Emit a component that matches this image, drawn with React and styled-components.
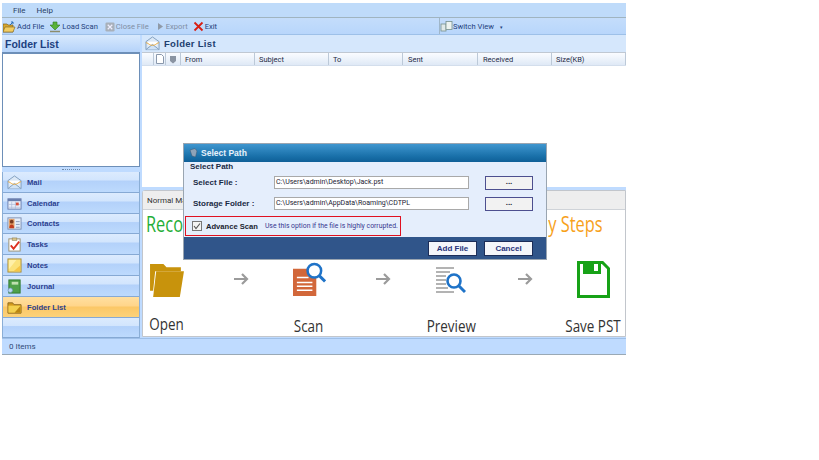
import React from 'react';
import styled, { createGlobalStyle } from 'styled-components';

const Global = createGlobalStyle`
  html, body { margin: 0; padding: 0; background: #fff; }
  body { font-family: Roboto, "Liberation Sans", Arial, sans-serif; }
`;

const Page = styled.div`
  width: 819px; height: 460px; background: #fff; overflow: hidden; padding: 3px 0 0 2px; box-sizing: border-box;
`;
const Win = styled.div`
  position: relative; width: 624px; height: 352px; background: #bfdbff; display: flex; flex-direction: column;
  box-sizing: border-box;
`;
const MenuBar = styled.div`
  height: 15px; flex: none; display: flex; align-items: center; gap: 11px; padding-left: 11px; box-sizing: border-box;
  background: #bfdbfa; border-bottom: 1px solid #a0b4c0; font-size: 8px; color: #2a3f66;
`;
const ToolBar = styled.div`
  height: 17px; flex: none; display: flex; align-items: stretch; background: linear-gradient(#c4ddfb, #b8d6fb);
  border-bottom: 1px solid #9dc0e8; font-size: 7.6px; color: #24417c; padding-left: 1px; box-sizing: border-box;
`;
const Tool = styled.span`
  display: flex; align-items: center; gap: 1px; padding-top: 1px; margin-right: ${p => p.$gap ?? 5}px; white-space: nowrap;
  color: ${p => p.$off ? '#7f8ea3' : '#24417c'};
`;
const SwitchWrap = styled.div`
  margin-left: auto; width: 187px; flex: none; box-sizing: border-box; display: flex; align-items: center;
  border-left: 1px solid #9fb6c9;
`;
const Caret = styled.span` font-size: 5px; margin-left: 5px; `;
const Body = styled.div`
  flex: 1; display: flex; gap: 2px; min-height: 0;
`;
const Side = styled.div`
  width: 138px; flex: none; display: flex; flex-direction: column;
`;
const SideHead = styled.div`
  height: 17px; flex: none; display: flex; align-items: center; padding-left: 3px; box-sizing: border-box;
  background: linear-gradient(#d8e9fd, #b5d3fa); font: bold 10.5px "Liberation Sans", sans-serif; color: #1d3f80;
`;
const TreeBox = styled.div`
  height: 115px; flex: none; background: #fff; border: 1px solid #6d8fb8; border-top: 2px solid #6d8fb8; box-sizing: border-box;
`;
const Grip = styled.div`
  height: 5px; flex: none; display: flex; justify-content: center; align-items: center; background: #bfdbff;
  &::before { content: ''; width: 18px; height: 1px; border-top: 1px dotted #6f8aa8; }
`;
const Nav = styled.div`
  flex: 1; display: flex; flex-direction: column; border: 1px solid #8aaed6; border-top: 0; border-bottom: 0; min-height: 0;
`;
const NavItem = styled.div`
  height: 20.8px; flex: none; box-sizing: border-box; display: flex; align-items: center; gap: 5px; padding: 1px 0 0 3px;
  border-bottom: 1px solid #86a9d4; font: bold 7.6px "Liberation Sans", sans-serif; color: #2c3f8f;
  background: ${p => p.$active
    ? 'linear-gradient(#ffdfa0 0, #ffd58a 45%, #fbc766 50%, #fcd27a 100%)'
    : 'linear-gradient(#dcebfe 0, #d2e5fd 40%, #b3d1fa 45%, #bddafd 100%)'};
`;
const NavIcon = styled.svg`
  width: 15px; height: 15px; flex: none; margin-left: 1px;
`;
const NavFill = styled.div`
  flex: 1; background: linear-gradient(#dcebfe 0, #d2e5fd 40%, #b3d1fa 45%, #bddafd 100%); border-bottom: 1px solid #86a9d4;
`;
const Main = styled.div`
  flex: 1; display: flex; flex-direction: column; min-width: 0;
`;
const MainHead = styled.div`
  height: 18px; flex: none; display: flex; align-items: center; gap: 4px; padding-left: 2px; box-sizing: border-box;
  background: #d5e7fc; font: bold 9.5px "Liberation Sans", sans-serif; letter-spacing: .3px; color: #21406f;
  border-bottom: 1px solid #c0c8d2;
`;
const Cols = styled.div`
  height: 13px; flex: none; display: flex; align-items: center; background: linear-gradient(#fafcff, #dfe9f6);
  font-size: 7.5px; color: #1f2b45; border-bottom: 1px solid #d3deec; box-sizing: border-box;
`;
const Col = styled.div`
  width: ${p => p.$w}px; flex: none; box-sizing: border-box; padding-left: ${p => p.$pad ?? 4}px; height: 100%;
  display: flex; align-items: center; border-right: 1px solid #bcc9d8;
`;
const List = styled.div`
  height: 121px; flex: none; background: #fff;
`;
const Gap = styled.div` height: 3px; flex: none; background: #bfdbff; `;
const TabPanel = styled.div`
  flex: 1; min-height: 0; display: flex; flex-direction: column; background: #fff; border: 1px solid #c2c6cc;
  border-radius: 3px 0 0 0; margin-bottom: 1px; box-sizing: border-box;
`;
const TabBar = styled.div`
  height: 19px; flex: none; background: #eeeeee; display: flex; align-items: center; padding-left: 4px;
  font-size: 8px; color: #333; white-space: nowrap; border-bottom: 1px solid #cfd3d8; box-sizing: border-box;
`;
const Banner = styled.div`
  flex: 1; display: flex; flex-direction: column; background: #fff; min-height: 0;
`;
const Title = styled.div`
  height: 27px; flex: none; display: flex; justify-content: space-between; align-items: center; padding: 0 22px 0 3px;
  font: 21px "Open Sans", sans-serif; white-space: nowrap;
`;
const Green = styled.span` color: #1fae38; display: inline-block; transform: scaleX(.78); transform-origin: left center; `;
const Orange = styled.span` color: #f7a11b; display: inline-block; transform: scaleX(.78); transform-origin: right center; `;
const Steps = styled.div`
  flex: 1; display: grid; grid-template-columns: 48px 94px 48px 94px 48px 94px 48px; align-items: start;
`;
const Step = styled.div`
  display: flex; flex-direction: column; align-items: center; width: 48px;
`;
const StepIcon = styled.div`
  height: 40px; display: flex; align-items: center; justify-content: center; margin-top: ${p => p.$top ?? 24}px;
`;
const StepLabel = styled.div`
  font: 16px/21px "Open Sans", sans-serif; color: #333; margin-top: ${p => p.$top ?? 13}px; white-space: nowrap;
  transform: scaleX(.84);
`;
const Arrow = styled.svg`
  width: 16px; height: 16px; margin: 34px 0 0 42px; flex: none; display: block;
`;
const Status = styled.div`
  height: 17px; flex: none; display: flex; align-items: center; padding-left: 7px; background: #bfdbff;
  border-top: 1px solid #9fc0e8; border-bottom: 1px solid #9aa9b5; font-size: 8px; color: #2f4a78; box-sizing: border-box;
`;
const Dialog = styled.div`
  position: absolute; left: 182px; top: 141px; width: 362px; height: 115px; display: flex; flex-direction: column;
  background: #e5eefc; box-shadow: 0 0 0 1px #9aa5b1; z-index: 2;
`;
const DlgTitle = styled.div`
  height: 18px; flex: none; display: flex; align-items: center; gap: 3px; padding-left: 5px;
  background: linear-gradient(#3f96cf, #186fa8 70%, #0f5f97); color: #e8f2fb; font: bold 8.5px "Liberation Sans", sans-serif;
`;
const DlgBody = styled.div`
  flex: 1; min-height: 0; display: flex; flex-direction: column;
`;
const Legend = styled.div`
  font: bold 8px/9px "Liberation Sans", sans-serif; color: #1a2a44; padding-left: 6px; height: 10px;
`;
const Row = styled.div`
  height: 21px; flex: none; display: flex; align-items: center; padding-left: 9px;
`;
const Label = styled.div`
  width: 81px; flex: none; font: bold 8px "Liberation Sans", sans-serif; color: #1a2a44;
`;
const Field = styled.div`
  width: 195px; height: 13px; flex: none; background: #fff; border: 1px solid #a9a9a9; box-sizing: border-box;
  font-size: 7px; color: #223; line-height: 11px; padding-left: 1px; white-space: nowrap;
`;
const Browse = styled.div`
  width: 48px; height: 14px; margin-left: 16px; flex: none; border: 1px solid #4d4f8f; background: #f2f2f2; box-sizing: border-box;
  font: bold 8px/10px "Liberation Sans", sans-serif; color: #223; text-align: center;
`;
const ScanBox = styled.div`
  width: 216px; height: 20px; margin: 2px 0 0 1px; flex: none; box-sizing: border-box; border: 1.5px solid #e01020; display: flex; align-items: center;
  padding-left: 6px; gap: 4px; white-space: nowrap;
`;
const Check = styled.svg` width: 10px; height: 10px; flex: none; `;
const ScanLabel = styled.span` font: bold 7.6px "Liberation Sans", sans-serif; color: #1a2430; margin-right: 3px; `;
const ScanHint = styled.span` font-size: 6.85px; color: #37368f; `;
const DlgFoot = styled.div`
  height: 22px; flex: none; margin-top: auto; background: #30558a; display: flex; align-items: center; justify-content: flex-end;
  gap: 7px; padding-right: 13px;
`;
const FootBtn = styled.div`
  width: 49px; height: 15px; box-sizing: border-box; border: 1px solid #1c2d58; background: #f4f6fa;
  font: bold 8px/13px "Liberation Sans", sans-serif; color: #27337a; text-align: center;
`;

const MailShape = () => (
  <>
    <path d="M1 6 8 1l7 5v8.500H1z" fill="#dbe8f6" stroke="#7f9dbd" />
    <path d="M3 6h10v4H3z" fill="#fff" />
    <path d="M1 14.500 8 9l7 5.500" fill="#cfe2f7" stroke="#7f9dbd" />
    <path d="M1 7c3 1 4 3 7 3s4-2 7-3" fill="none" stroke="#e8a93c" />
  </>
);

const icons = {
  Mail: <NavIcon viewBox="0 0 16 16"><MailShape /></NavIcon>,
  Calendar: (
    <NavIcon viewBox="0 0 16 16">
      <rect x="1" y="3" width="14" height="11" fill="#e8eefa" stroke="#6a7fae" />
      <rect x="1" y="3" width="14" height="2.500" fill="#6a7fae" />
      <path d="M5 6v8M9 6v8M1.500 9h13M1.500 12h13" stroke="#a9b7d6" strokeWidth=".7" />
      <rect x="9.500" y="7" width="3" height="3" fill="#d8503a" />
    </NavIcon>
  ),
  Contacts: (
    <NavIcon viewBox="0 0 16 16">
      <rect x="1" y="2" width="14" height="12" fill="#e6eefa" stroke="#7d8fb0" />
      <rect x="2" y="3" width="6" height="10" fill="#e4a26a" />
      <circle cx="5" cy="6" r="2" fill="#7a3a20" />
      <path d="M2.500 13c0-3 1-4 2.500-4s2.500 1 2.500 4z" fill="#c23c20" />
      <path d="M9.500 6h4M9.500 9h4M9.500 12h4" stroke="#8a9bb8" />
    </NavIcon>
  ),
  Tasks: (
    <NavIcon viewBox="0 0 16 16">
      <rect x="2" y="2" width="12" height="13" fill="#fff" stroke="#9a8f70" />
      <rect x="5.500" y="1" width="5" height="2.500" fill="#d8c48a" stroke="#8d7d50" strokeWidth=".6" />
      <path d="m4 9 3 3.500L13 5" fill="none" stroke="#dc3020" strokeWidth="2" />
    </NavIcon>
  ),
  Notes: (
    <NavIcon viewBox="0 0 16 16">
      <rect x="1" y="1" width="14" height="14" fill="#fbe27a" stroke="#a88b3a" />
      <path d="M2 2h8L2 12z" fill="#fff0a8" />
      <path d="M14 14H7l7-6z" fill="#f6c646" />
    </NavIcon>
  ),
  Journal: (
    <NavIcon viewBox="0 0 16 16">
      <rect x="2" y="1" width="12" height="14" fill="#4fa14a" stroke="#2f7a30" />
      <rect x="5" y="3" width="7" height="3" fill="#bfe0b0" />
      <circle cx="3.500" cy="12" r="2.400" fill="#bcd8ef" stroke="#6a8fb8" strokeWidth=".7" />
    </NavIcon>
  ),
  'Folder List': (
    <NavIcon viewBox="0 0 16 16">
      <path d="M1 3h5l1.500 2H15v9H1z" fill="#d39a1c" stroke="#8e6a20" />
      <path d="M1.500 6h13v7.500h-13z" fill="#f3d04e" />
      <path d="M8 13.500 14.500 6v7.500z" fill="#b98512" />
    </NavIcon>
  ),
};
const navNames = ['Mail', 'Calendar', 'Contacts', 'Tasks', 'Notes', 'Journal', 'Folder List'];

const GreyArrow = () => (
  <Arrow viewBox="0 0 16 16">
    <path d="M1 8h13M9 3l5 5-5 5" fill="none" stroke="#9b9b9b" strokeWidth="2.200" />
  </Arrow>
);

export default function App() {
  return (
    <Page>
      <Global />
      <Win>
        <MenuBar><span>File</span><span>Help</span></MenuBar>
        <ToolBar>
          <Tool $gap={5}>
            <svg width="13" height="12" viewBox="0 0 13 12">
              <path d="M0 3h4l1 1h5v7H0z" fill="#d7a62e" stroke="#7c6220" strokeWidth=".7" />
              <path d="M2 6h10l-2 5H0z" fill="#f2cd63" stroke="#7c6220" strokeWidth=".6" />
              <path d="M7 4l3-3M10 1H8M10 1v2" stroke="#2d6fb5" strokeWidth="1" fill="none" />
            </svg>
            Add File
          </Tool>
          <Tool $gap={7}>
            <svg width="12" height="12" viewBox="0 0 12 12">
              <path d="M4 1h4v3h3L6 9 1 4h3z" fill="#59b23a" stroke="#2f7a24" strokeWidth=".6" />
              <path d="M1 10.500h10" stroke="#8c8c6c" strokeWidth="1.500" />
            </svg>
            Load Scan
          </Tool>
          <Tool $off $gap={7}>
            <svg width="10" height="10" viewBox="0 0 11 11">
              <rect x=".5" y=".5" width="10" height="10" rx="1.500" fill="#a8b0ba" />
              <path d="m3 3 5 5M8 3 3 8" stroke="#eef" strokeWidth="1.300" />
            </svg>
            Close File
          </Tool>
          <Tool $off $gap={5}>
            <svg width="9" height="9" viewBox="0 0 9 9"><path d="M2 1v7l5-3.500z" fill="#8f9aa8" /></svg>
            Export
          </Tool>
          <Tool $gap={0}>
            <svg width="11" height="11" viewBox="0 0 11 11"><path d="m1.500 1.500 8 8M9.500 1.500l-8 8" stroke="#d81e12" strokeWidth="1.800" /></svg>
            Exit
          </Tool>
          <SwitchWrap>
            <svg width="13" height="12" viewBox="0 0 13 12">
              <rect x="1" y="4" width="5" height="7" fill="#dfe9e9" stroke="#75908c" strokeWidth=".8" />
              <rect x="6" y="1.500" width="6" height="8" fill="#edf4f0" stroke="#75908c" strokeWidth=".8" />
            </svg>
            <Tool $gap={0}>Switch View<Caret>▾</Caret></Tool>
          </SwitchWrap>
        </ToolBar>
        <Body>
          <Side>
            <SideHead>Folder List</SideHead>
            <TreeBox />
            <Grip />
            <Nav>
              {navNames.map(n => (
                <NavItem key={n} $active={n === 'Folder List'}>{icons[n]}<span>{n}</span></NavItem>
              ))}
              <NavFill />
            </Nav>
          </Side>
          <Main>
            <MainHead><NavIcon viewBox="0 0 16 16"><MailShape /></NavIcon>Folder List</MainHead>
            <Cols>
              <Col $w={12} $pad={0} />
              <Col $w={12} $pad={2}>
                <svg width="8" height="10" viewBox="0 0 8 10"><path d="M.5.5h5l2 2v7h-7z" fill="#fff" stroke="#8a98ac" /></svg>
              </Col>
              <Col $w={15} $pad={3}>
                <svg width="8" height="9" viewBox="0 0 8 9"><path d="M1 1h6v5L4 8.500 1 6z" fill="#8a94a2" /></svg>
              </Col>
              <Col $w={74}>From</Col>
              <Col $w={74}>Subject</Col>
              <Col $w={74}>To</Col>
              <Col $w={75} $pad={5}>Sent</Col>
              <Col $w={74} $pad={5}>Received</Col>
              <Col $w={74}>Size(KB)</Col>
            </Cols>
            <List />
            <Gap />
            <TabPanel>
              <TabBar>Normal Ma</TabBar>
              <Banner>
                <Title><Green>Reco</Green><Orange>y Steps</Orange></Title>
                <Steps>
                  <Step>
                    <StepIcon $top={21}>
                      <svg width="34" height="37" viewBox="0 0 33 36">
                        <path d="M0 4h13l3 3h14v4H5L3 30H0z" fill="#c8930c" />
                        <path d="M6 11h27l-4 25H3z" fill="#c8930c" />
                      </svg>
                    </StepIcon>
                    <StepLabel $top={16}>Open</StepLabel>
                  </Step>
                  <GreyArrow />
                  <Step>
                    <StepIcon $top={22}>
                      <svg width="33" height="37" viewBox="0 0 34 38">
                        <path d="M0 8h17l7 7v21H0z" fill="#d2673a" />
                        <path d="M4 17h12M4 22h16M4 26h16M4 30h16" stroke="#fff" strokeWidth="1.600" />
                        <circle cx="22" cy="10" r="7" fill="#fff" stroke="#1f73c8" strokeWidth="2.600" />
                        <path d="m27 15 6 6" stroke="#1f73c8" strokeWidth="3" />
                      </svg>
                    </StepIcon>
                    <StepLabel $top={17}>Scan</StepLabel>
                  </Step>
                  <GreyArrow />
                  <Step>
                    <StepIcon $top={24}>
                      <svg width="30" height="28" viewBox="0 0 30 28">
                        <path d="M0 1h18M0 5h14M0 9h10M0 13h10M0 17h10M0 21h12M0 25h18" stroke="#9a9a9a" strokeWidth="1.600" />
                        <circle cx="18" cy="14" r="6.500" fill="#fff" stroke="#1f73c8" strokeWidth="2.600" />
                        <path d="m23 19 6 6" stroke="#1f73c8" strokeWidth="3" />
                      </svg>
                    </StepIcon>
                    <StepLabel $top={15}>Preview</StepLabel>
                  </Step>
                  <GreyArrow />
                  <Step>
                    <StepIcon $top={22}>
                      <svg width="33" height="37" viewBox="0 0 33 37">
                        <path d="M1.500 1.500h24l6 6v28h-30z" fill="#fff" stroke="#17a217" strokeWidth="3" />
                        <path d="M6 2h18v11H6z" fill="#17a217" />
                        <rect x="17" y="3" width="4" height="7" fill="#fff" />
                      </svg>
                    </StepIcon>
                    <StepLabel $top={17}>Save PST</StepLabel>
                  </Step>
                </Steps>
              </Banner>
            </TabPanel>
          </Main>
        </Body>
        <Status>0 Items</Status>
        <Dialog>
          <DlgTitle>
            <svg width="9" height="10" viewBox="0 0 9 10"><path d="M1 2 6 .5 8 3 6.500 9 3 8z" fill="#8fa3b8" stroke="#3d5670" strokeWidth=".5" /></svg>
            Select Path
          </DlgTitle>
          <DlgBody>
            <Legend>Select Path</Legend>
            <Row><Label>Select File :</Label><Field>C:\Users\admin\Desktop\Jack.pst</Field><Browse>...</Browse></Row>
            <Row><Label>Storage Folder :</Label><Field>C:\Users\admin\AppData\Roaming\CDTPL</Field><Browse>...</Browse></Row>
            <ScanBox>
              <Check viewBox="0 0 10 10">
                <rect x=".5" y=".5" width="9" height="9" fill="#f4f4f4" stroke="#777" />
                <path d="m2 5 2 2.500L8 2.500" fill="none" stroke="#555" strokeWidth="1.100" />
              </Check>
              <ScanLabel>Advance Scan</ScanLabel>
              <ScanHint>Use this option if the file is highly corrupted.</ScanHint>
            </ScanBox>
            <DlgFoot><FootBtn>Add File</FootBtn><FootBtn>Cancel</FootBtn></DlgFoot>
          </DlgBody>
        </Dialog>
      </Win>
    </Page>
  );
}
